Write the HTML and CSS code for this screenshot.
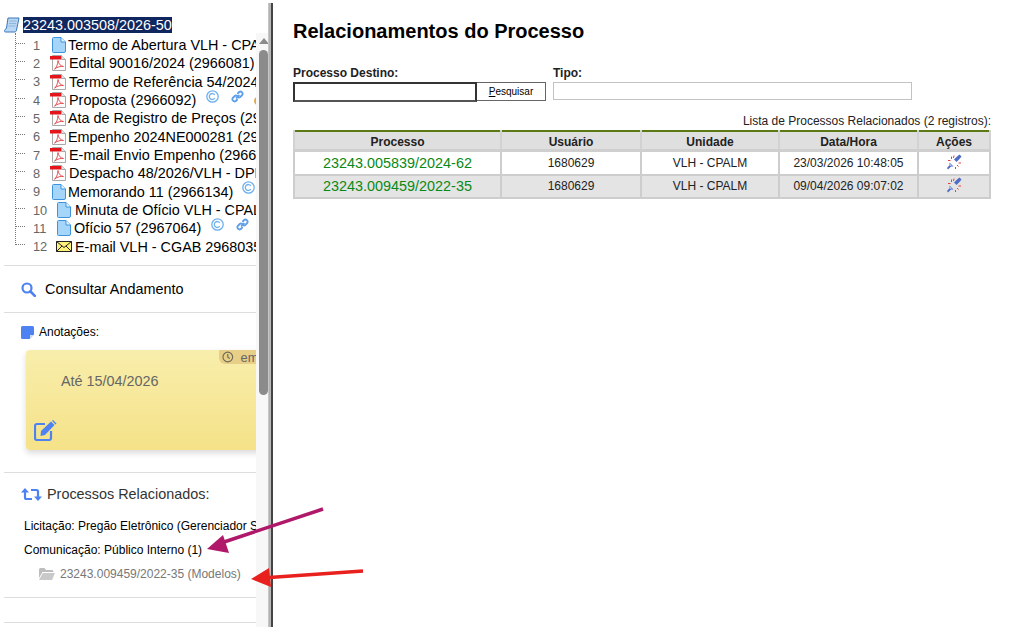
FILE: index.html
```html
<!DOCTYPE html>
<html lang="pt-BR">
<head>
<meta charset="utf-8">
<title>Relacionamentos do Processo</title>
<link rel="stylesheet" href="styles.css">
</head>
<body>
<svg class="defs" width="0" height="0" aria-hidden="true">
  <defs>
    <symbol id="doc" viewBox="0 0 14 16">
      <path d="M1.500.5h7.500l4.500 4.500v9a1.500 1.500 0 0 1-1.500 1.500H1.500A1 1 0 0 1 .5 14.500V1.500a1 1 0 0 1 1-1z" fill="#a5d5f8" stroke="#3f93dc"/>
      <path d="M9 .5v4.500h4.500" fill="#e8f5fe" stroke="#3f93dc"/>
    </symbol>
    <symbol id="pdf" viewBox="0 0 16 16">
      <path d="M2.500.5h9l4 4v11h-13z" fill="#fdfdfd" stroke="#a8a8a8"/>
      <path d="M11.500.5v4h4" fill="#e4e4e4" stroke="#a8a8a8"/>
      <path d="M0 1h11v3.500H0z" fill="#e5141b"/>
      <path d="M4.500 14c2-1 3-4 3.500-8.500.5 3.500 2.500 5.500 5.500 6-3-.5-6 .5-9 2.500z" fill="none" stroke="#e0454a" stroke-width=".9"/>
    </symbol>
    <symbol id="copy" viewBox="0 0 13 13">
      <circle cx="6.500" cy="6.500" r="5.700" fill="none" stroke="#6fb0ee" stroke-width="1.300"/>
      <path d="M8.800 4.800a3 3 0 1 0 0 3.400" fill="none" stroke="#6fb0ee" stroke-width="1.300"/>
    </symbol>
    <symbol id="link" viewBox="0 0 14 14">
      <g fill="none" stroke="#5f9fe8" stroke-width="2" stroke-linecap="round">
        <path d="M6 8.500 8.500 6"/>
        <path d="M7.500 3.500 9 2a2.400 2.400 0 0 1 3.200 3.300L10 7.500a2.300 2.300 0 0 1-2.800 0"/>
        <path d="M6.500 10.500 5 12a2.400 2.400 0 0 1-3.200-3.300L4 6.500a2.300 2.300 0 0 1 2.800 0"/>
      </g>
    </symbol>
    <symbol id="plug" viewBox="0 0 16 16">
      <path d="M8 5.500 11 2.500 13.500.5 15.500 2.500 13.500 5 10.500 8z" fill="#4f6cc6"/>
      <path d="M1 14 3.500 11 3.500 8.500 7.500 12.500 5 12.500 2 15.500z" fill="#4f6cc6"/>
      <path d="M3.500 9 6 11.500 3.500 12z" fill="#b4c4ec"/>
      <path d="M5.500 2.500V5M8 1.500 7.500 4M2 6.500h2.500M11 11l1.500 1.500M12.500 9H15M9.500 13v2" stroke="#e2413c" stroke-width="1" fill="none"/>
    </symbol>
  </defs>
</svg>

<div class="app">
  <aside class="sidebar">
    <div class="side-content">
      <div class="tree">
        <div class="tree-head">
          <svg class="ic-scroll" viewBox="0 0 16 16" width="16" height="16"><path d="M4 1h11l-2.500 12c-.3 1.500-1 2-2 2H1.500c-1 0-1.300-1-.8-1.800L2.500 11z" fill="#b9d6f2" stroke="#3a78b8"/><path d="M5.500 4h7M5 6.500h7M4.500 9h7" stroke="#8db6de"/></svg>
          <span class="tree-root">23243.003508/2026-50</span>
        </div>
        <div class="row"><span class="conn"></span><span class="num">1</span><svg class="ic-doc n1"><use href="#doc"/></svg><span class="label">Termo de Abertura VLH - CPALM (2966079)</span></div>
        <div class="row"><span class="conn"></span><span class="num">2</span><svg class="ic-pdf"><use href="#pdf"/></svg><span class="label t1">Edital 90016/2024 (2966081)</span></div>
        <div class="row"><span class="conn"></span><span class="num">3</span><svg class="ic-pdf"><use href="#pdf"/></svg><span class="label t1">Termo de Referência 54/2024 (2966085)</span></div>
        <div class="row"><span class="conn"></span><span class="num">4</span><svg class="ic-pdf"><use href="#pdf"/></svg><span class="label t1">Proposta (2966092)</span><svg class="ic-mark first"><use href="#copy"/></svg><svg class="ic-mark second"><use href="#link"/></svg><span class="ic-orange"></span></div>
        <div class="row"><span class="conn"></span><span class="num">5</span><svg class="ic-pdf"><use href="#pdf"/></svg><span class="label">Ata de Registro de Preços (2966101)</span></div>
        <div class="row"><span class="conn"></span><span class="num">6</span><svg class="ic-pdf"><use href="#pdf"/></svg><span class="label">Empenho 2024NE000281 (2966110)</span></div>
        <div class="row"><span class="conn"></span><span class="num">7</span><svg class="ic-pdf"><use href="#pdf"/></svg><span class="label t1">E-mail Envio Empenho (2966118)</span></div>
        <div class="row"><span class="conn"></span><span class="num">8</span><svg class="ic-pdf"><use href="#pdf"/></svg><span class="label t1">Despacho 48/2026/VLH - DPLOG (2966125)</span></div>
        <div class="row"><span class="conn"></span><span class="num">9</span><svg class="ic-doc n1"><use href="#doc"/></svg><span class="label">Memorando 11 (2966134)</span><svg class="ic-mark third"><use href="#copy"/></svg></div>
        <div class="row"><span class="conn"></span><span class="num wide">10</span><svg class="ic-doc n2"><use href="#doc"/></svg><span class="label">Minuta de Ofício VLH - CPALM (2967001)</span></div>
        <div class="row"><span class="conn"></span><span class="num wide">11</span><svg class="ic-doc n2"><use href="#doc"/></svg><span class="label t0">Ofício 57 (2967064)</span><svg class="ic-mark first"><use href="#copy"/></svg><svg class="ic-mark second"><use href="#link"/></svg></div>
        <div class="row"><span class="conn"></span><span class="num wide">12</span><svg class="ic-mail" viewBox="0 0 16 11" width="16" height="11"><path d="M.5.5h15v10H.5z" fill="#fff27a" stroke="#222"/><path d="M.5.5 8 6.500 15.500.5M.5 10.500 6 5M15.500 10.500 10 5" fill="none" stroke="#222"/></svg><span class="label">E-mail VLH - CGAB 2968035</span></div>
      </div>

      <hr class="rule first-rule">
      <div class="consult">
        <svg class="ic-search" viewBox="0 0 15 15" width="15" height="15"><circle cx="6" cy="6" r="4.500" fill="none" stroke="#4c82f2" stroke-width="2.200"/><path d="M9.500 9.500 13.800 13.800" stroke="#4c82f2" stroke-width="2.600" stroke-linecap="round"/></svg>
        <span>Consultar Andamento</span>
      </div>
      <hr class="rule">
      <div class="notes-title">
        <svg viewBox="0 0 13 13" width="13" height="13"><path d="M1.500 0h10A1.500 1.500 0 0 1 13 1.500V8.500L8.500 13h-7A1.500 1.500 0 0 1 0 11.500v-10A1.500 1.500 0 0 1 1.500 0z" fill="#4c82f2"/><path d="M9 9h3.500L9 12.500z" fill="#cfdcfa"/></svg>
        <span>Anotações:</span>
      </div>
      <div class="note">
        <div class="note-badge">
          <svg viewBox="0 0 12 12" width="12" height="12"><circle cx="6" cy="6" r="5" fill="none" stroke="#6b6b58" stroke-width="1.200"/><path d="M6 3v3.300l2 1.200" fill="none" stroke="#6b6b58" stroke-width="1.200"/></svg>
          <span>em 10/04/2026</span>
        </div>
        <p class="note-text">Até 15/04/2026</p>
        <svg class="ic-edit" viewBox="0 0 23 21" width="23" height="21"><path d="M11 4H3a2 2 0 0 0-2 2v12a2 2 0 0 0 2 2h12a2 2 0 0 0 2-2v-7" fill="none" stroke="#4c82f2" stroke-width="2.200"/><path d="M7 11 17 1.500l3.500 3.500L11 15l-4.500 1z" fill="#4c82f2"/><path d="M18 .8l1-.8 3.500 3.500-1 1z" fill="#4c82f2"/></svg>
      </div>
      <hr class="rule note-rule">
      <div class="rel-title">
        <svg viewBox="0 0 21 13" width="21" height="13"><g fill="none" stroke="#4c82f2" stroke-width="2.200"><path d="M4 3v6.500a1.500 1.500 0 0 0 1.500 1.500H11"/><path d="M17 10V3.500A1.500 1.500 0 0 0 15.500 2H10"/></g><path d="M0 4.500 4 0l4 4.500zM13 8.500l4 4.500 4-4.500z" fill="#4c82f2"/></svg>
        <span>Processos Relacionados:</span>
      </div>
      <div class="rel-line">Licitação: Pregão Eletrônico (Gerenciador SRP)</div>
      <div class="rel-line">Comunicação: Público Interno (1)</div>
      <div class="rel-proc">
        <svg viewBox="0 0 16 12" width="16" height="12"><path d="M0 1.500A1.500 1.500 0 0 1 1.500 0h4l1.500 2h6a1.500 1.500 0 0 1 1.500 1.500V4H3.500L0 10z" fill="#bdbdbd"/><path d="M3.800 5H16l-3 7H0z" fill="#c9c9c9"/></svg>
        <span>23243.009459/2022-35 (Modelos)</span>
      </div>
      <hr class="rule proc-rule">
      <hr class="rule last-rule">
    </div>
    <div class="scrollbar">
      <span class="scroll-up"></span>
      <span class="scroll-thumb"></span>
    </div>
  </aside>
  <div class="divider"></div>

  <main class="main">
    <h1 class="title">Relacionamentos do Processo</h1>
    <form class="form">
      <div class="field-dest">
        <label class="field-label">Processo Destino:</label>
        <div class="search-group">
          <input class="input-dest" type="text">
          <button class="btn" type="button"><u>P</u>esquisar</button>
        </div>
      </div>
      <div class="field-type">
        <label class="field-label">Tipo:</label>
        <input class="input-type" type="text">
      </div>
    </form>
    <div class="caption">Lista de Processos Relacionados (2 registros):</div>
    <table class="table">
      <thead>
        <tr><th class="c1">Processo</th><th class="c2">Usuário</th><th class="c3">Unidade</th><th class="c4">Data/Hora</th><th class="c5">Ações</th></tr>
      </thead>
      <tbody>
        <tr><td><a class="proc-link">23243.005839/2024-62</a></td><td>1680629</td><td>VLH - CPALM</td><td>23/03/2026 10:48:05</td><td><svg class="ic-plug"><use href="#plug"/></svg></td></tr>
        <tr class="alt"><td><a class="proc-link">23243.009459/2022-35</a></td><td>1680629</td><td>VLH - CPALM</td><td>09/04/2026 09:07:02</td><td><svg class="ic-plug"><use href="#plug"/></svg></td></tr>
      </tbody>
    </table>
  </main>
</div>

<svg class="arrows" viewBox="0 0 1013 627" width="1013" height="627" aria-hidden="true">
  <path d="M323 509 218 544" stroke="#b0186a" stroke-width="3.500" fill="none"/>
  <path d="M207 549 223 535 229 553z" fill="#b0186a"/>
  <path d="M363 571 262 578" stroke="#e8201e" stroke-width="3.500" fill="none"/>
  <path d="M251 579 269 568 271 587z" fill="#e8201e"/>
</svg>
</body>
</html>
```
FILE: styles.css
```css
* { box-sizing: border-box; }
html, body { margin: 0; height: 100%; overflow: hidden; background: #fff; }
body { font-family: "Liberation Sans", Arial, sans-serif; color: #000; position: relative; }
.defs { position: absolute; }
.app { display: flex; height: 627px; }

/* Sidebar */
.sidebar { display: flex; width: 268px; flex: none; height: 100%; }
.side-content { width: 256px; flex: none; overflow: hidden; }

.tree { position: relative; padding-top: 17px; height: 256px; }
.tree::before { content: ""; position: absolute; left: 15px; top: 33px; height: 212px; border-left: 1px dotted #777; }
.tree-head { display: flex; align-items: center; height: 16px; padding-left: 4px; margin-bottom: 3px; }
.ic-scroll { flex: none; }
.tree-root { margin-left: 3px; background: #10265f; color: #fff; font-size: 14.4px; line-height: 16px; white-space: nowrap; }

.row { display: flex; align-items: center; height: 18.33px; padding-left: 16px; white-space: nowrap; }
.conn { flex: none; width: 9px; height: 0; margin-top: -4px; border-top: 1px dotted #777; }
.num { flex: none; width: 27px; padding-left: 8px; font-size: 12.8px; color: #666; }
.num.wide { width: 32px; }
.label { flex: none; font-size: 14.4px; line-height: 18px; color: #000; margin-left: 2px; }
.label.t1 { margin-left: 3px; }
.label.t0 { margin-left: 1px; }
.ic-doc { flex: none; width: 14px; height: 16px; margin-left: 1px; }
.ic-doc.n1 { margin-left: 0; }
.ic-doc.n2 { margin-left: 0; margin-right: 2px; }
.ic-pdf { flex: none; width: 16px; height: 16px; margin-left: -2px; }
.ic-mail { flex: none; margin-left: -1px; margin-right: 1px; }
.ic-mark { flex: none; width: 13px; height: 13px; margin-top: -8px; }
.ic-mark.first { margin-left: 10px; }
.ic-mark.second { margin-left: 12px; }
.ic-mark.third { margin-left: 9px; }
.ic-orange { flex: none; width: 8px; height: 8px; margin-left: 10px; margin-top: 2px; border: 2px solid #e0a94d; border-radius: 50%; }

.rule { margin: 0 0 0 4px; height: 1px; border: 0; background: #ddd; }
.first-rule { margin-top: 9px; }
.consult { display: flex; align-items: center; height: 46px; padding-left: 21px; font-size: 14.4px; gap: 9px; }
.notes-title { display: flex; align-items: center; gap: 5px; padding: 12px 0 0 21px; font-size: 12px; height: 26px; }
.note { position: relative; margin: 11px 0 0 26px; width: 300px; height: 100px; border-radius: 4px; background: linear-gradient(#f8eeac, #f5e288); box-shadow: 0 3px 6px rgba(0,0,0,.15); padding: 21px 0 0 35px; }
.note-badge { position: absolute; left: 193px; top: 0; display: flex; align-items: center; gap: 7px; height: 14px; padding-left: 3px; width: 107px; background: #e8cf88; border-bottom-left-radius: 6px; font-size: 12.8px; color: #666; white-space: nowrap; }
.note-text { margin: 0; font-size: 14.4px; line-height: 20px; color: #666; }
.ic-edit { display: block; margin: 29px 0 0 -27px; }
.note-rule { margin-top: 22px; }
.rel-title { display: flex; align-items: center; gap: 5px; height: 20px; margin-top: 11px; padding-left: 21px; font-size: 14.4px; color: #333; }
.rel-line { margin-top: 10px; padding-left: 24px; font-size: 12px; line-height: 14px; white-space: nowrap; }
.rel-line + .rel-line { margin-top: 10px; }
.rel-title + .rel-line { margin-top: 15px; }
.rel-proc { display: flex; align-items: center; gap: 5px; margin-top: 10px; padding-left: 39px; font-size: 12px; line-height: 14px; color: #777; }
.proc-rule { margin-top: 16px; }
.last-rule { margin-top: 24px; }

/* Scrollbar */
.scrollbar { width: 12px; flex: none; padding: 33px 0 0 3px; background: linear-gradient(#fff 33px, #f7f7f7 33px); display: flex; flex-direction: column; }
.scroll-up { width: 0; height: 0; margin: 5px 0 0 0; border-left: 5px solid transparent; border-right: 5px solid transparent; border-bottom: 6px solid #8b8b8b; }
.scroll-thumb { width: 9px; height: 345px; margin-top: 6px; border-radius: 5px; background: #8b8b8b; }

.divider { width: 5px; flex: none; margin-top: 3px; background: linear-gradient(90deg, #d0d0d0 0, #a8a8a8 40%, #c8c8c8 60%, #444 60%, #444 100%); }

/* Main */
.main { flex: 1; padding: 20px 22px 0 20px; min-width: 0; }
.title { margin: 0; font-size: 20px; line-height: 22px; font-weight: bold; color: #000; }
.form { display: flex; gap: 7px; margin-top: 24px; }
.field-label { display: block; font-size: 12px; line-height: 14px; font-weight: bold; color: #222; margin-bottom: 2px; }
.search-group { display: flex; align-items: flex-start; }
.input-dest { width: 184px; height: 20px; border: 2px solid #333; border-bottom-color: #555; padding: 0; background: #fff; outline: 0; }
.btn { width: 69px; height: 19px; padding: 0; border: 1px solid #666; border-left: 0; background: #fff; font-family: "Liberation Sans", Arial, sans-serif; font-size: 10px; color: #000; }
.field-type { width: 359px; }
.input-type { display: block; width: 359px; height: 18px; border: 1px solid #c2c2c2; padding: 0; background: #fff; }
.caption { margin-top: 12px; margin-bottom: 2px; text-align: right; font-size: 12px; line-height: 14px; color: #222; }
.table { width: 696px; border-collapse: collapse; table-layout: fixed; border-top: 2px solid #5b7a14; font-size: 12px; text-align: center; }
.table th { height: 19px; padding: 3px 0 0; background: #dfdfdf; border: 2px solid #d2d2d2; border-top: 0; border-bottom: 3px solid #cfcfcf; font-weight: bold; color: #222; }
.table td { height: 24px; padding: 0; border: 2px solid #cdcdcd; color: #222; background: #fff; }
.table .alt td { height: 23px; background: #e4e4e4; }
.c1 { width: 207px; }
.c2 { width: 140px; }
.c3 { width: 138px; }
.c4 { width: 139px; }
.c5 { width: 72px; }
.proc-link { font-size: 14.4px; color: #0a8a14; }
.ic-plug { display: block; width: 16px; height: 16px; margin: -2px 0 0 27px; }

/* Annotation arrows drawn over the screenshot */
.arrows { position: absolute; left: 0; top: 0; pointer-events: none; }
```
